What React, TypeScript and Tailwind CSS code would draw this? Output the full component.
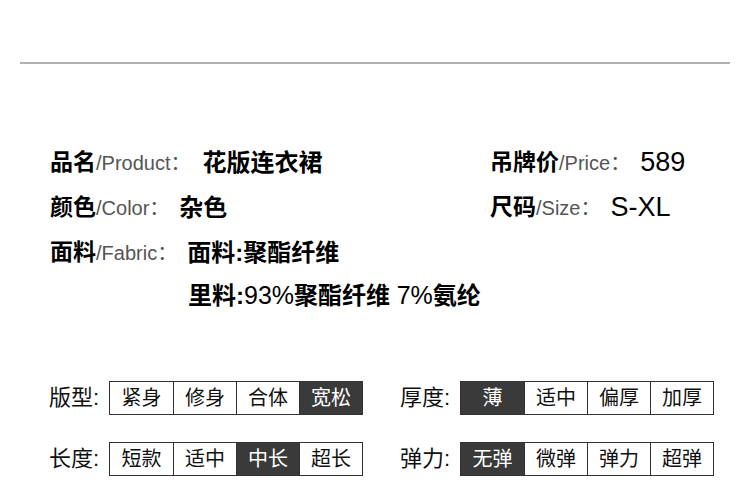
const cjk = { fontFamily: '"Liberation Sans", "Noto Sans CJK SC", sans-serif' }

function Label({ zh, en }: { zh: string; en: string }) {
  return (
    <span className="whitespace-nowrap flex items-center">
      <span className="font-bold text-[23px] text-black">{zh}</span>
      <span className="text-[20px] text-[#555]">/{en}：</span>
    </span>
  )
}

function Options({ label, items, active }: { label: string; items: string[]; active: number }) {
  return (
    <div className="flex items-center">
      <span className="text-[22px] text-[#111] w-[60px] leading-none">{label}</span>
      <div className="flex border border-[#333]">
        {items.map((t, i) => (
          <div
            key={i}
            className={`w-[63px] h-[32px] flex items-center justify-center text-[20px] leading-none ${i > 0 ? "border-l border-[#333]" : ""} ${i === active ? "bg-[#3a3a3a] text-white" : "bg-white text-[#111]"}`}
          >
            {t}
          </div>
        ))}
      </div>
    </div>
  )
}

export default function App() {
  return (
    <div className="w-[750px] h-[486px] bg-white overflow-hidden" style={cjk}>
      <div className="pt-[62px] px-[20px]">
        <div className="h-[2px] bg-[#b0b0b0]" />
      </div>

      <div className="flex pl-[50px] pt-[76px]">
        <div className="w-[440px] flex flex-col">
          <div className="h-[45px] flex items-center">
            <Label zh="品名" en="Product" />
            <span className="font-bold text-[24px] ml-[12px]">花版连衣裙</span>
          </div>
          <div className="h-[45px] flex items-center">
            <Label zh="颜色" en="Color" />
            <span className="font-bold text-[24px] ml-[10px]">杂色</span>
          </div>
          <div className="h-[45px] flex items-center">
            <Label zh="面料" en="Fabric" />
            <span className="font-bold text-[24px] ml-[10px]">面料:聚酯纤维</span>
          </div>
          <div className="h-[41px] flex items-center pl-[138px]">
            <span className="font-bold text-[24px] whitespace-nowrap">
              里料:<span className="font-normal text-[25px]">93%</span>聚酯纤维 <span className="font-normal text-[25px]">7%</span>氨纶
            </span>
          </div>
        </div>
        <div className="flex flex-col">
          <div className="h-[45px] flex items-center">
            <Label zh="吊牌价" en="Price" />
            <span className="text-[27px] ml-[10px]">589</span>
          </div>
          <div className="h-[45px] flex items-center">
            <Label zh="尺码" en="Size" />
            <span className="text-[27px] ml-[10px]">S-XL</span>
          </div>
        </div>
      </div>

      <div className="flex pl-[49px] pt-[65px] gap-[37px]">
        <div className="flex flex-col gap-[27px]">
          <Options label="版型:" items={["紧身", "修身", "合体", "宽松"]} active={3} />
          <Options label="长度:" items={["短款", "适中", "中长", "超长"]} active={2} />
        </div>
        <div className="flex flex-col gap-[27px]">
          <Options label="厚度:" items={["薄", "适中", "偏厚", "加厚"]} active={0} />
          <Options label="弹力:" items={["无弹", "微弹", "弹力", "超弹"]} active={0} />
        </div>
      </div>
    </div>
  )
}
